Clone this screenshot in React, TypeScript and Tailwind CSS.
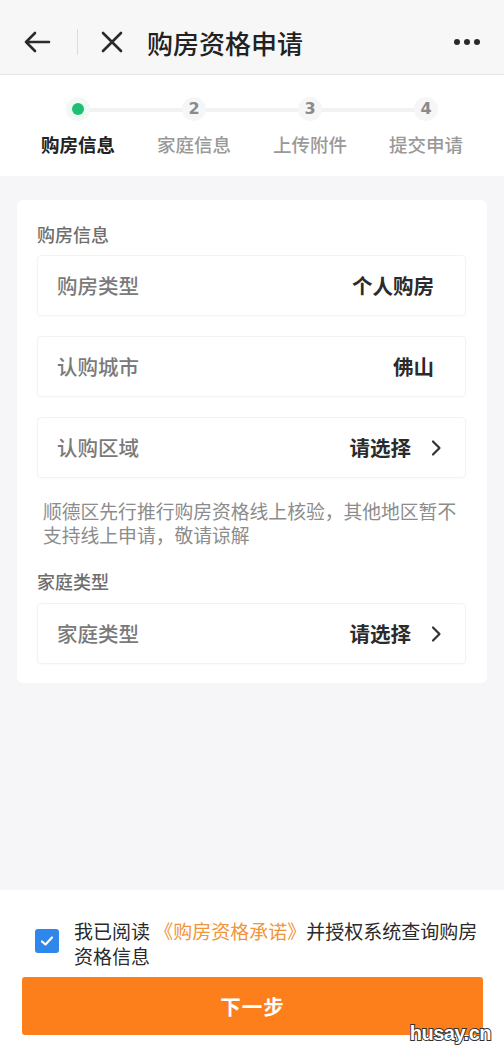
import React from "react";

const font = { fontFamily: '"Noto Sans CJK SC", "Noto Sans", sans-serif' };

function Chevron() {
  return (
    <svg width="12" height="18" viewBox="0 0 12 18" className="ml-[19px] -mr-[8px]">
      <path d="M3 2.5 L9.5 9 L3 15.5" fill="none" stroke="#333" strokeWidth="2.2" strokeLinecap="round" strokeLinejoin="round" />
    </svg>
  );
}

function Row({ label, value, arrow }: { label: string; value: string; arrow?: boolean }) {
  return (
    <div className="h-[61px] flex items-center justify-between pl-[19px] pr-[31px] rounded-[4px] border border-[#f3f3f5] shadow-[0_1px_3px_rgba(0,0,0,0.025)] bg-white">
      <span className="text-[20.5px] text-[#7a7a7a] font-medium">{label}</span>
      <span className="flex items-center">
        <span className="text-[20.5px] text-[#2b2b2b] font-bold">{value}</span>
        {arrow && <Chevron />}
      </span>
    </div>
  );
}

const steps = ["购房信息", "家庭信息", "上传附件", "提交申请"];

export default function App() {
  return (
    <div style={font} className="min-h-[1050px] flex flex-col bg-[#f6f6f8] relative">
      {/* top navigation */}
      <div className="h-[75px] bg-[#f7f7f7] border-b border-[#e4e4e4] flex items-center pt-[10px] px-[22px]">
        <svg width="30" height="24" viewBox="0 0 30 24">
          <path d="M27 12 H4 M13 3 L4 12 L13 21" fill="none" stroke="#2a2a2a" strokeWidth="2.6" strokeLinecap="round" strokeLinejoin="round" />
        </svg>
        <div className="w-px h-[26px] bg-[#dcdcdc] ml-[25px] mr-[23px]" />
        <svg width="22" height="22" viewBox="0 0 22 22">
          <path d="M2 2 L20 20 M20 2 L2 20" stroke="#2a2a2a" strokeWidth="2.6" strokeLinecap="round" />
        </svg>
        <span className="ml-[24px] text-[26px] text-[#222] font-medium">购房资格申请</span>
        <div className="ml-auto flex gap-[4px] mr-[2px]">
          <span className="w-[6px] h-[6px] rounded-full bg-[#2a2a2a]" />
          <span className="w-[6px] h-[6px] rounded-full bg-[#2a2a2a]" />
          <span className="w-[6px] h-[6px] rounded-full bg-[#2a2a2a]" />
        </div>
      </div>

      {/* progress steps */}
      <div className="bg-white h-[101px] relative">
        <div className="absolute left-[79px] right-[78px] top-[33px] h-[4px] bg-[#f2f2f2] rounded-full" />
        <div className="relative grid grid-cols-4 w-[464px] ml-[20px] pt-[21px]">
          {steps.map((s, i) => (
            <div key={s} className="flex flex-col items-center">
              <div className="h-[26px] flex items-center justify-center">
                {i === 0 ? (
                  <span className="w-[24px] h-[24px] rounded-full bg-[#eefaf3] flex items-center justify-center">
                    <span className="w-[12px] h-[12px] rounded-full bg-[#1dbf73]" />
                  </span>
                ) : (
                  <span className="w-[24px] h-[24px] rounded-full bg-[#f6f6f6] flex items-center justify-center text-[16px] font-bold text-[#8a8a8a]" style={{ fontFamily: '"DejaVu Sans", sans-serif' }}>
                    {i + 1}
                  </span>
                )}
              </div>
              <span className={`mt-[9px] text-[18.5px] ${i === 0 ? "font-bold text-[#222]" : "font-medium text-[#999]"}`}>{s}</span>
            </div>
          ))}
        </div>
      </div>

      {/* form card */}
      <div className="mx-[17px] mt-[24px] bg-white rounded-[6px] px-[20px] pt-[21px] pb-[19px]">
        <div className="text-[18px] text-[#6e6e6e] font-medium leading-[26px]">购房信息</div>
        <div className="mt-[8px] flex flex-col gap-[20px] mr-[1px]">
          <Row label="购房类型" value="个人购房" />
          <Row label="认购城市" value="佛山" />
          <Row label="认购区域" value="请选择" arrow />
        </div>
        <p className="mt-[21px] pl-[6px] pr-[2px] text-[18.8px] leading-[24px] text-[#8c8c8c]">
          顺德区先行推行购房资格线上核验，其他地区暂不支持线上申请，敬请谅解
        </p>
        <div className="mt-[21px] text-[18px] text-[#6e6e6e] font-medium leading-[26px]">家庭类型</div>
        <div className="mt-[9px] mr-[1px]">
          <Row label="家庭类型" value="请选择" arrow />
        </div>
      </div>

      {/* agreement and submit */}
      <div className="mt-auto bg-white pt-[28px] pb-[15px]">
        <div className="flex items-start pl-[35px] pr-[20px]">
          <span className="mt-[11px] w-[24px] h-[24px] shrink-0 rounded-[3px] bg-[#2f86eb] flex items-center justify-center">
            <svg width="16" height="16" viewBox="0 0 16 16">
              <path d="M3 8.5 L6.5 11.5 L13 4.5" fill="none" stroke="#fff" strokeWidth="2.2" strokeLinecap="round" strokeLinejoin="round" />
            </svg>
          </span>
          <p className="ml-[15px] text-[19px] leading-[25px] text-[#2a2a2a]">
            我已阅读 <span className="text-[#f0953c]">《购房资格承诺》</span>并授权系统查询购房资格信息
          </p>
        </div>
        <button className="mt-[9px] mx-[22px] w-[461px] h-[58px] rounded-[3px] bg-[#fd7f1b] text-white text-[20.5px] font-bold tracking-[1px]">
          下一步
        </button>
      </div>

      <span
        className="absolute right-[13px] bottom-[2px] text-[20px] font-black text-white [-webkit-text-stroke:2px_#333] [paint-order:stroke_fill] tracking-[-0.5px]"
        style={{ fontFamily: '"Liberation Sans", Arial, sans-serif' }}
      >
        husay.cn
      </span>
    </div>
  );
}
